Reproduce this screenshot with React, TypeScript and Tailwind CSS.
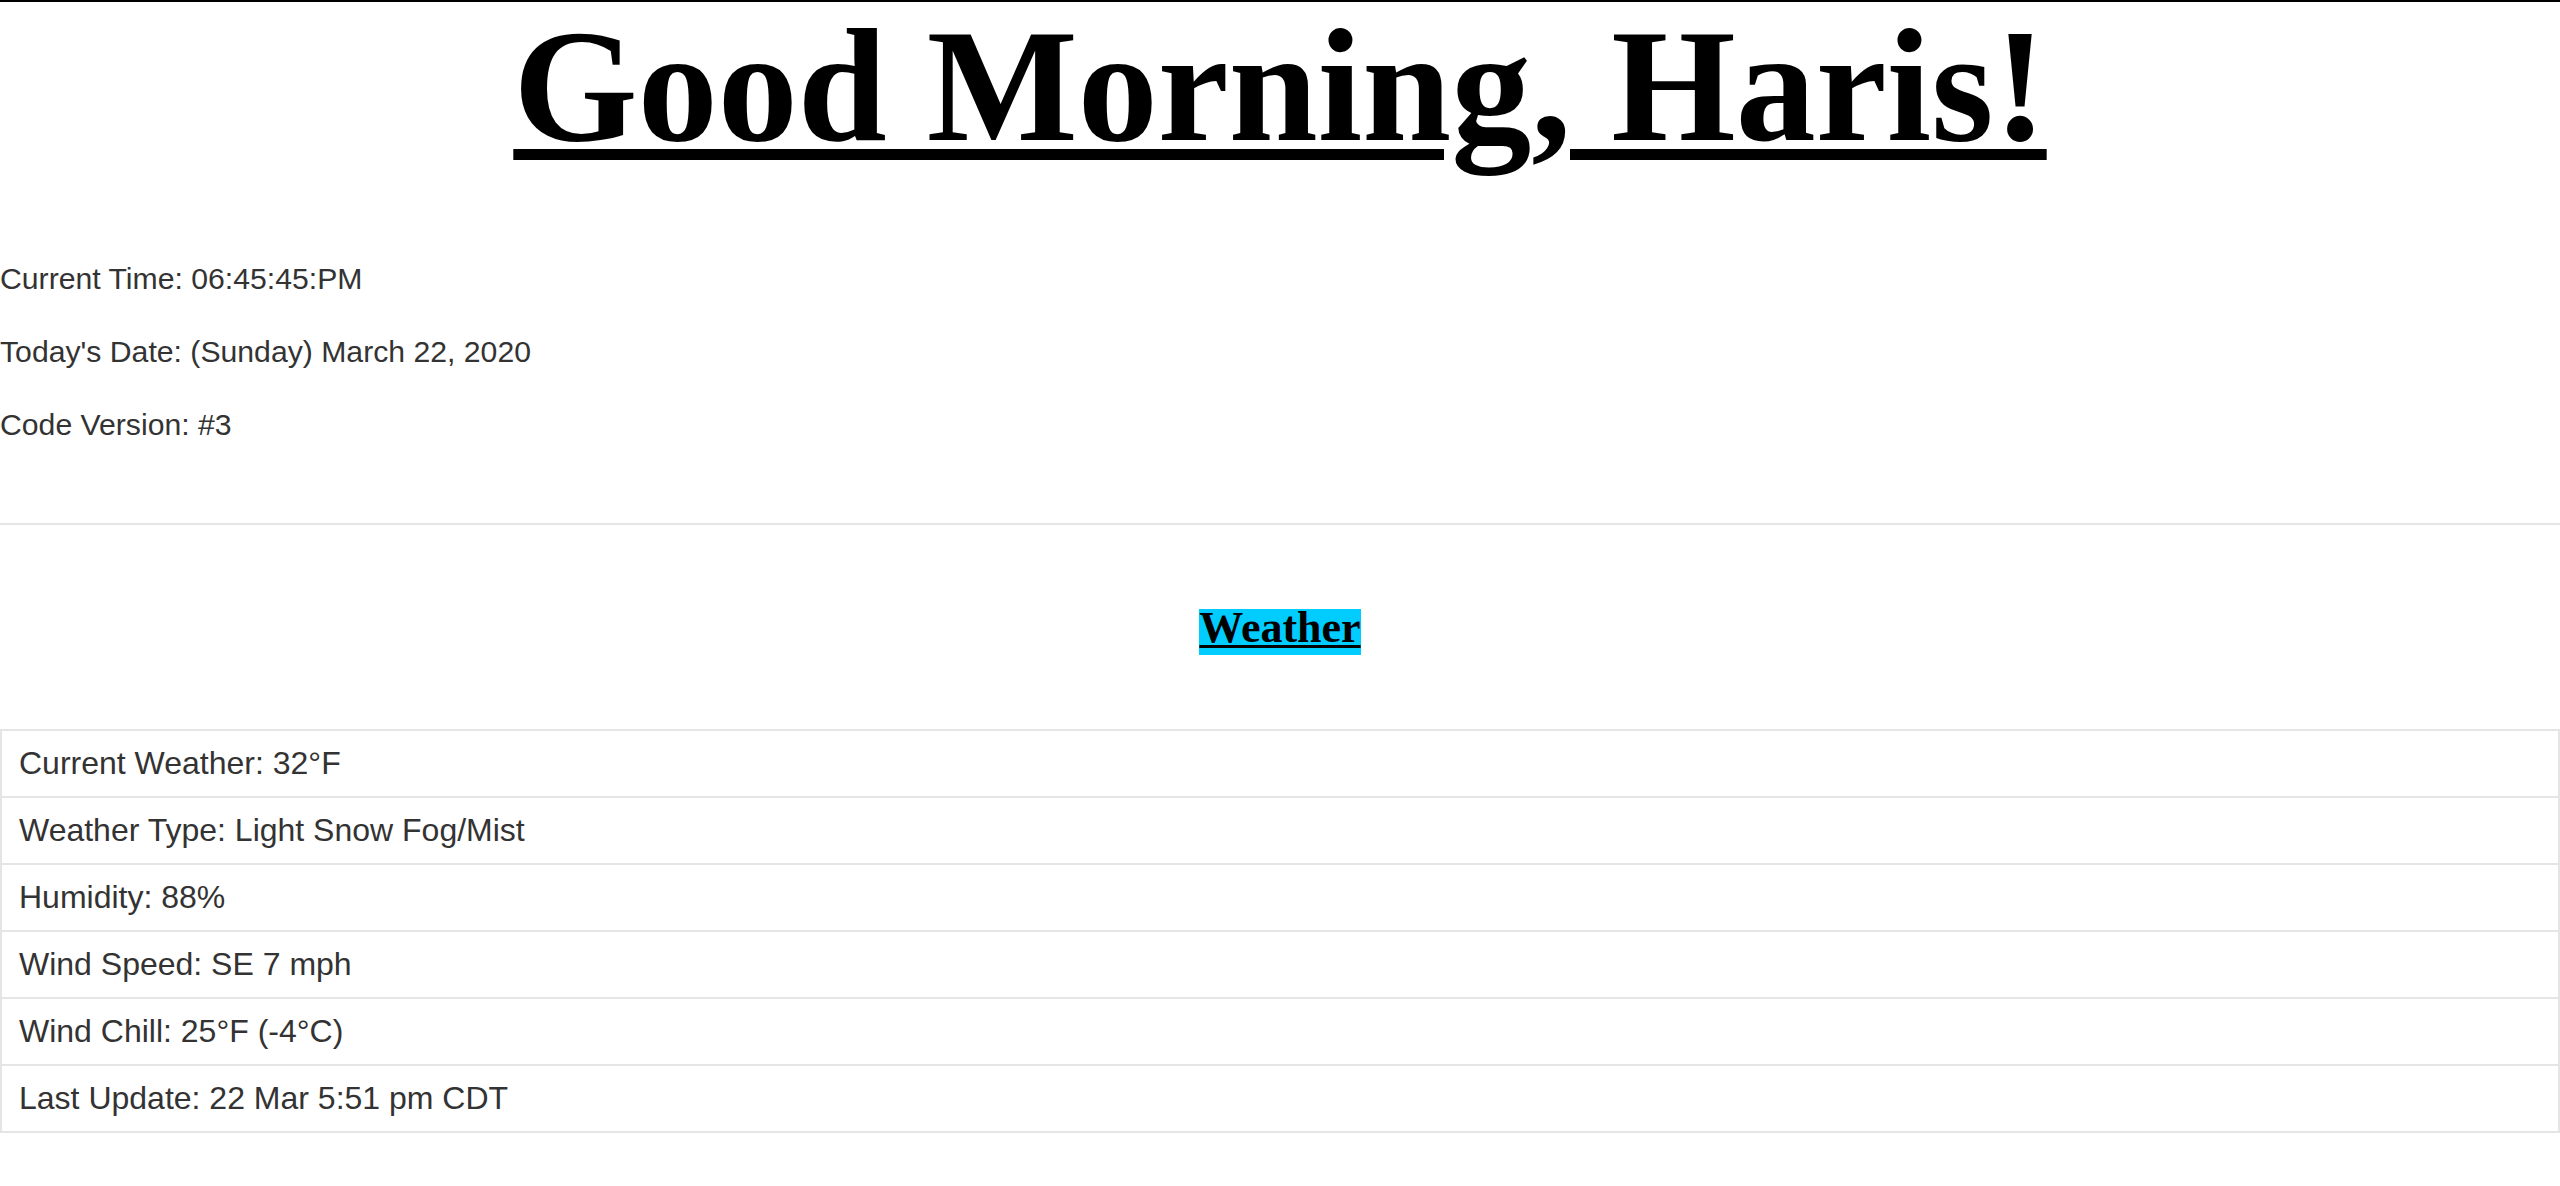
const info = [
  "Current Time: 06:45:45:PM",
  "Today's Date: (Sunday) March 22, 2020",
  "Code Version: #3",
];

const weather = [
  "Current Weather: 32°F",
  "Weather Type: Light Snow Fog/Mist",
  "Humidity: 88%",
  "Wind Speed: SE 7 mph",
  "Wind Chill: 25°F (-4°C)",
  "Last Update: 22 Mar 5:51 pm CDT",
];

export default function App() {
  return (
    <div className="min-h-screen bg-white border-t-2 border-black text-[#333] font-['Liberation_Sans',Arial,sans-serif]">
      <h1 className="mt-1 text-center text-black text-[160px] leading-[160px] font-bold font-['Liberation_Serif','Times_New_Roman',serif] underline decoration-[11px] underline-offset-[9px]">
        Good Morning, Haris!
      </h1>

      {/* infos */}
      <div className="mt-[91px] flex flex-col gap-[30px] text-[30.2px] leading-[43px]">
        {info.map((line) => (
          <p key={line}>{line}</p>
        ))}
      </div>

      <hr className="mt-[77px] border-0 border-t-2 border-[#e5e5e5]" />

      <div className="mt-[84px] flex justify-center">
        <h2 className="inline-block bg-[#00ccff] text-black text-[44px] leading-[38px] pb-[8px] font-bold font-['Liberation_Serif','Times_New_Roman',serif] underline decoration-[3px] underline-offset-[3px]">
          Weather
        </h2>
      </div>

      <ul className="mt-[74px] flex flex-col">
        {weather.map((w, i) => (
          <li
            key={w}
            className={
              "border-x-2 border-t-2 border-[#e5e5e5] pl-[17px] pt-[9px] pb-[10px] text-[32px] leading-[46px]" +
              (i === weather.length - 1 ? " border-b-2" : "")
            }
          >
            {w}
          </li>
        ))}
      </ul>
    </div>
  );
}
